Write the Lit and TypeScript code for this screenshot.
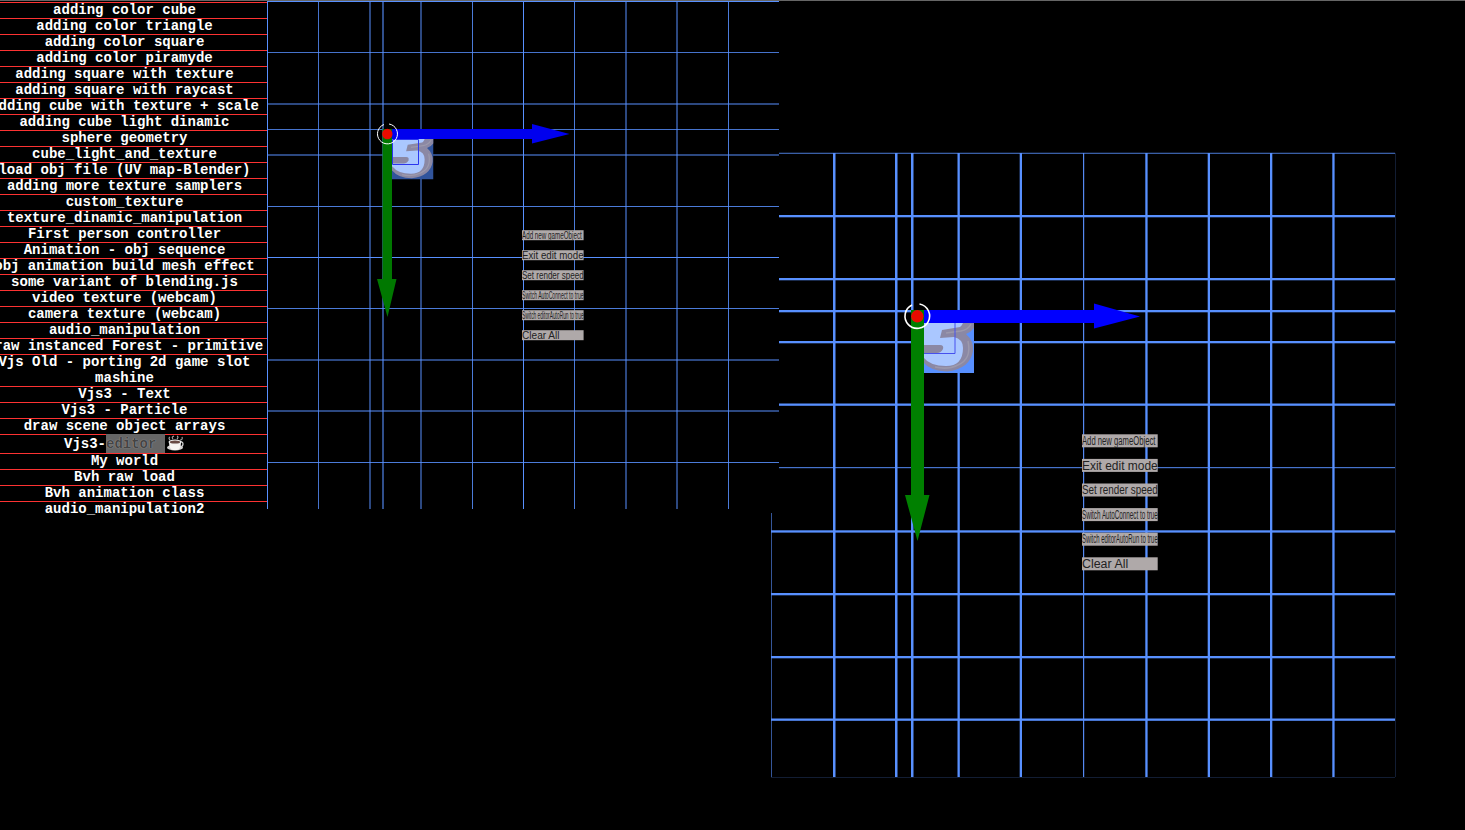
import { LitElement, html, svg, css } from "lit";
import { customElement } from "lit/decorators.js";

const BLUE = "#5890ff";

const DEMOS: string[] = [
  "adding color cube", "adding color triangle", "adding color square", "adding color piramyde",
  "adding square with texture", "adding square with raycast", "adding cube with texture + scale",
  "adding cube light dinamic", "sphere geometry", "cube_light_and_texture",
  "load obj file (UV map-Blender)", "adding more texture samplers", "custom_texture",
  "texture_dinamic_manipulation", "First person controller", "Animation - obj sequence",
  "obj animation build mesh effect", "some variant of blending.js", "video texture (webcam)",
  "camera texture (webcam)", "audio_manipulation", "draw instanced Forest - primitive",
  "Vjs Old - porting 2d game slot mashine", "Vjs3 - Text", "Vjs3 - Particle",
  "draw scene object arrays", "EDITOR", "My world", "Bvh raw load", "Bvh animation class",
  "audio_manipulation2",
];

const MENU: [string, number][] = [
  ["Add new gameObject", 0.97], ["Exit edit mode", 1], ["Set render speed", 1],
  ["Switch AutoConnect to true", 1], ["Switch editorAutoRun to true", 1], ["Clear All", 0.61],
];

// [position, thickness, opacity]
type Line = [number, number, number];

const vline = ([p, w, o]: Line, y1: number, y2: number) =>
  svg`<rect x=${p} y=${y1} width=${w} height=${y2 - y1} fill=${BLUE} opacity=${o}></rect>`;
const hline = ([p, w, o]: Line, x1: number, x2: number) =>
  svg`<rect x=${x1} y=${p} width=${x2 - x1} height=${w} fill=${BLUE} opacity=${o}></rect>`;

const menu = (x: number, y: number, w: number, h: number, step: number, size: number) =>
  MENU.map(([label, ratio], i) => svg`
    <rect x=${x} y=${y + i * step} width=${w} height=${h} fill="#afa9a9"></rect>
    <text x=${x} y=${y + i * step + h * 0.5 + size * 0.34} font-size=${size} class="label"
      textLength=${w * ratio} lengthAdjust="spacingAndGlyphs">${label}</text>`);

@customElement("demo-list")
class DemoList extends LitElement {
  static styles = css`
    :host { display: block; width: 287px; margin-left: -19px; padding-top: 2px; color: #fff;
      font: bold 14px/16px "Courier New", "Liberation Mono", monospace; text-align: center; }
    .row { box-shadow: inset 0 1px #fd3232; padding: 0 3px; min-height: 16px; }
    .row.editor { height: 19px; line-height: 20px; display: flex; justify-content: center; padding: 0; }
    .sel { background: #666; color: #444; text-shadow: 0 0 1px #bbb; white-space: pre; width: 59px; text-align: left; }
    .cup { width: 19px; height: 19px; margin-left: 1px; }
  `;
  render() {
    return DEMOS.map((d) => d === "EDITOR"
      ? html`<div class="row editor"><span>Vjs3-</span><span class="sel">editor </span>
          <svg class="cup" viewBox="0 0 19 19">
            <path d="M13 8q4-1 4 2t-4 3" fill="none" stroke="#d8d8d8" stroke-width="1.3"/>
            <path d="M4 6Q2 4 4 3M7 5Q5 3 8 2M11 5q2-2 0-3M14 6q3 0 2-3" stroke="#aaa" stroke-width="1.1" fill="none"/>
            <ellipse cx="9" cy="13.500" rx="8" ry="3" fill="#d5d3d2"/>
            <path d="M3 8h12q0 7-4 8H7Q3 15 3 8Z" fill="#f7f4f2"/>
            <ellipse cx="9" cy="8" rx="6.500" ry="2.400" fill="#eee"/>
            <ellipse cx="9" cy="8" rx="5.200" ry="1.600" fill="#694943"/>
          </svg></div>`
      : html`<div class="row">${d}</div>`);
  }
}

@customElement("app-root")
class AppRoot extends LitElement {
  static styles = css`
    :host { display: block; position: relative; width: 1465px; height: 830px; overflow: hidden; background: #000; }
    .rule { position: absolute; inset: 0 0 auto 0; height: 1px; background: #666; }
    .scene { position: absolute; inset: 0; width: 1465px; height: 830px; }
    .label { font-family: "Liberation Sans", Arial, sans-serif; fill: #222; }
    .list { position: relative; height: 517px; overflow: hidden; width: 267px; }
  `;

  five(x: number, y: number, s: number, bg: string) {
    return svg`<svg x=${x} y=${y} width=${s} height=${s} viewBox="0 0 54 54">
      <rect width="54" height="54" fill=${bg}></rect>
      <path d="M0 0H54V9Q51 13 46 15Q54 22 53 32Q50 50 27 52.500Q10 52 3 43L0 42Z" fill="#8b88a4"></path>
      <path d="M0 0H44Q43 6 40 8L22 11L20 19L34 18Q43 20 43 29Q43 47 26 47Q10 47 3 38H0Z" fill="#aac7ff"></path>
      <path d="M0 26H20Q24 26 23 30Q21 34 17 34H0Z" fill="#8b88a4"></path>
      <path d="M51 5Q48 11 41 12L26 14M48 22Q52 40 38 46Q28 51 15 48" fill="none" stroke="#9c99ac" stroke-width="1.500"></path>
    </svg>`;
  }

  render() {
    const lv: Line[] = [[267, 1, 1], [318, 1, 0.8], [369, 2, 0.5], [382, 2, 0.55], [420, 2, 0.5],
      [472, 1, 0.85], [523, 1, 1], [574, 1, 0.85], [625, 2, 0.5], [676, 2, 0.5], [728, 1, 0.85]];
    const lh: Line[] = [[1, 1, 1], [52, 1, 0.8], [103, 2, 0.5], [129, 1, 0.8], [154, 2, 0.5], [206, 1, 0.85],
      [257, 1, 1], [308, 1, 0.85], [359, 2, 0.5], [410, 2, 0.5], [462, 1, 0.85]];
    const rv: Line[] = [[833, 2.5, 1], [895, 2.5, 1], [911, 2.5, 1], [957.5, 2.3, 1], [1019.7, 2.3, 1],
      [1083, 1.2, 0.95], [1145.3, 2.3, 1], [1207.7, 2.3, 1], [1270, 2.3, 1], [1332.3, 2.3, 1], [1395, 1, 0.2]];
    const rh: Line[] = [[152.7, 1.3, 0.65], [215, 2.3, 1], [278, 2.3, 1], [310, 2.3, 1], [341, 2.3, 1],
      [403.5, 2.3, 1], [467, 1.2, 0.8], [530.3, 2.3, 1], [593, 2.3, 1], [656, 2.3, 1], [718.5, 2.3, 1], [777, 1, 0.2]];
    return html`
      <div class="rule"></div>
      <svg class="scene" viewBox="0 0 1465 830">
        ${rv.map((l) => vline(l, 153, 777))}
        ${rh.map((l) => hline(l, 771, 1395))}
        ${this.five(920, 319, 54, BLUE)}
        <path d="M923.500 322.500H955V353.500H923.500Z" fill="none" stroke="#4650ee"></path>
        <path d="M917 310H1094V303.500L1140 316.500L1094 328.500V323H917Z" fill="#00f"></path>
        <path d="M911 310H924V495H929.500L917.500 541L905 495H911Z" fill="#008000"></path>
        <path d="M919.500 304A12.300 12.300 0 1 1 912 305" fill="none" stroke="#fff" stroke-width="1.600"></path>
        <circle cx="917.300" cy="316.300" r="6.200" fill="#e90b00"></circle>
        ${menu(1082, 434.3, 75.7, 13, 24.6, 12.5)}
        <rect x="268" y="1" width="511" height="512" fill="#000"></rect>
        <rect x="771" y="513" width="1" height="264" fill=${BLUE} opacity=".6"></rect>
        ${lv.map((l) => vline(l, 1, 509))}
        ${lh.map((l) => hline(l, 267, 779))}
        ${this.five(390, 136, 43.5, "#31549c")}
        <path d="M392.500 139.500H418.500V164.500H392.500Z" fill="none" stroke="#2a35ee"></path>
        <path d="M387 129H532V124L569.500 134L532 143.500V139H387Z" fill="#0000ee"></path>
        <path d="M382.500 129H392V279H396.500L387.500 317L377 279H382.500Z" fill="#007800"></path>
        <path d="M389 124A10 10 0 1 1 384 124.500" fill="none" stroke="#fff" stroke-width="1"></path>
        <circle cx="387.300" cy="134" r="5.200" fill="#e90b00"></circle>
        ${menu(522, 230.2, 61.6, 10, 20, 10)}
      </svg>
      <div class="list"><demo-list></demo-list></div>`;
  }
}
